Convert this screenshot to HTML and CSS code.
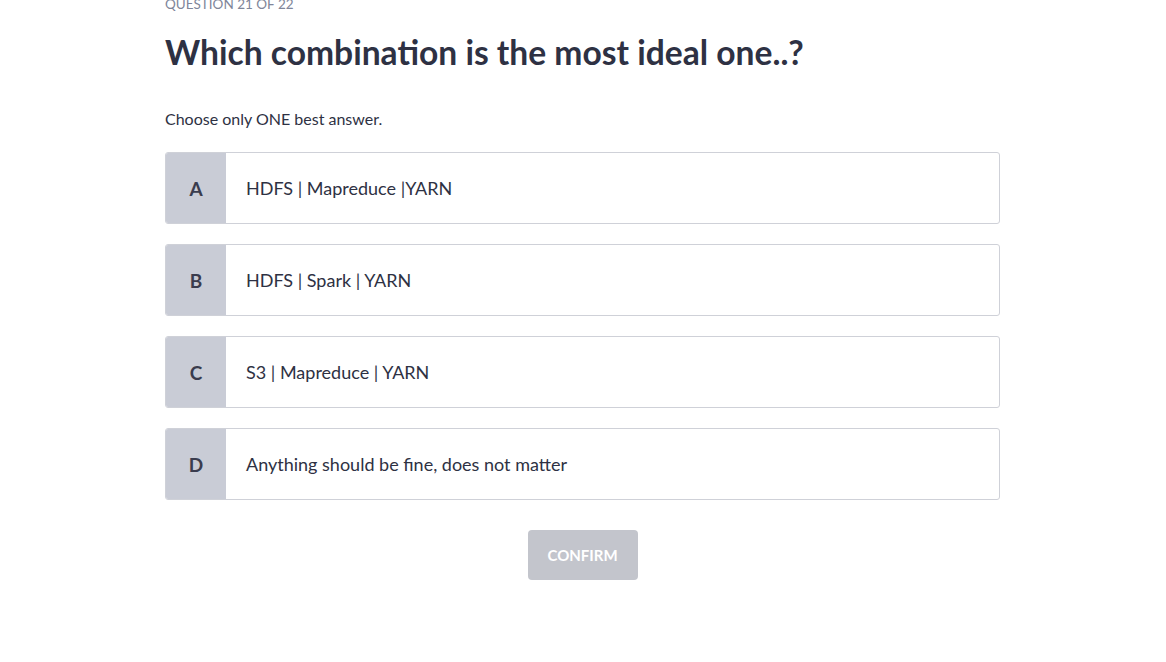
FILE: index.html
```html
<!DOCTYPE html>
<html>
<head>
<meta charset="utf-8">
<link rel="stylesheet" href="styles.css">
</head>
<body>
<main class="quiz">
  <div class="counter">QUESTION 21 OF 22</div>
  <h1 class="question">Which combination is the most ideal one..?</h1>
  <p class="hint">Choose only ONE best answer.</p>
  <div class="options">
    <div class="option"><div class="letter">A</div><div class="text">HDFS | Mapreduce |YARN</div></div>
    <div class="option"><div class="letter">B</div><div class="text">HDFS | Spark | YARN</div></div>
    <div class="option"><div class="letter">C</div><div class="text">S3 | Mapreduce | YARN</div></div>
    <div class="option"><div class="letter">D</div><div class="text">Anything should be fine, does not matter</div></div>
  </div>
  <div class="actions"><button class="confirm">CONFIRM</button></div>
</main>
</body>
</html>
```
FILE: styles.css
```css
html, body {
  margin: 0;
  padding: 0;
  background: #ffffff;
}
body {
  font-family: Lato, "Open Sans", sans-serif;
  color: #2e3143;
}
.quiz {
  width: 835px;
  margin-left: 165px;
  margin-top: -6px;
}
.counter {
  font-size: 13.5px;
  line-height: 20px;
  color: #80869a;
}
.question {
  margin: 16px 0 0;
  font-size: 33.6px;
  line-height: 44px;
  font-weight: 700;
  color: #2e3143;
}
.hint {
  margin: 34px 0 0;
  font-size: 16px;
  line-height: 22px;
}
.options {
  margin-top: 22px;
  display: flex;
  flex-direction: column;
  gap: 20px;
}
.option {
  display: flex;
  height: 72px;
  box-sizing: border-box;
  border: 1px solid #cfd1d8;
  border-radius: 3px;
  overflow: hidden;
}
.letter {
  width: 60px;
  background: #c9ccd6;
  display: flex;
  align-items: center;
  justify-content: center;
  font-size: 19px;
  font-weight: 700;
  color: #3a3c4e;
}
.text {
  display: flex;
  align-items: center;
  padding-left: 20px;
  font-size: 18px;
}
.actions {
  display: flex;
  justify-content: center;
  margin-top: 30px;
}
.confirm {
  width: 110px;
  height: 50px;
  border: none;
  border-radius: 4px;
  background: #c3c5cc;
  color: #ffffff;
  font-family: inherit;
  font-size: 15px;
  font-weight: 700;
}
```
